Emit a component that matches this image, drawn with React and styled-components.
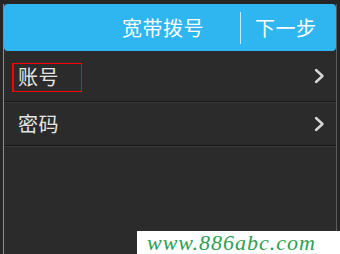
import React from "react";
import styled, { createGlobalStyle } from "styled-components";

const Global = createGlobalStyle`
  html, body {
    margin: 0;
    padding: 0;
    background: #2a2a2a;
  }
  body {
    font-family: "Noto Sans CJK SC", "Noto Sans", sans-serif;
  }
`;

const Screen = styled.div`
  position: relative;
  width: 340px;
  height: 254px;
  box-sizing: border-box;
  padding: 4px 3px 0 3px;
  background: #262626;
  overflow: hidden;
`;

const Panel = styled.div`
  height: 100%;
  background: #2b2b2b;
  border-left: 1px solid #8c8c8c;
  border-right: 1px solid #5a5a5a;
`;

const Header = styled.div`
  height: 47px;
  background: #2fb5f0;
  border-radius: 4px;
  display: flex;
  align-items: center;
  white-space: nowrap;
`;

const Title = styled.div`
  flex-shrink: 0;
  margin-left: 118px;
  color: #ffffff;
  font-size: 20px;
  letter-spacing: 0.5px;
  width: 110px;
`;

const Divider = styled.div`
  flex-shrink: 0;
  width: 1px;
  height: 32px;
  background: #c8ecfb;
  margin-left: 8px;
`;

const Next = styled.div`
  flex-shrink: 0;
  margin-left: 14px;
  color: #ffffff;
  font-size: 20px;
  letter-spacing: 0.5px;
`;

const Row = styled.div`
  height: ${(p) => p.h}px;
  display: flex;
  align-items: center;
  justify-content: space-between;
  padding: 0 11px 0 14px;
  border-bottom: 1px solid #161616;
  box-shadow: 0 1px 0 #3a3a3a;
`;

const Label = styled.div`
  position: relative;
  color: #e4e4e4;
  font-size: 20px;
  letter-spacing: 0.5px;
`;

const Mark = styled.div`
  position: absolute;
  left: -6px;
  top: 1px;
  width: 67px;
  height: 27px;
  border: 1px solid #ff0000;
  border-left-width: 2px;
`;

const Chevron = () => (
  <svg width="12" height="16" viewBox="0 0 12 16">
    <path d="M3 2 L9.5 8 L3 14" fill="none" stroke="#d6d6d6" strokeWidth="2.4" strokeLinecap="round" strokeLinejoin="round" />
  </svg>
);

const Watermark = styled.div`
  position: absolute;
  right: 0;
  bottom: 0;
  width: 203px;
  height: 23px;
  background: #ffffff;
  color: #2e9e52;
  font-family: "Liberation Serif", "DejaVu Serif", serif;
  font-style: italic;
  font-size: 22px;
  line-height: 23px;
  padding-left: 10px;
  box-sizing: border-box;
  letter-spacing: 1px;
`;

export default function App() {
  return (
    <>
      <Global />
      <Screen>
        <Panel>
          <Header>
            <Title>宽带拨号</Title>
            <Divider />
            <Next>下一步</Next>
          </Header>
          <Row h={50}>
            <Label>
              <Mark />
              账号
            </Label>
            <Chevron />
          </Row>
          <Row h={43}>
            <Label>密码</Label>
            <Chevron />
          </Row>
        </Panel>
        <Watermark>www.886abc.com</Watermark>
      </Screen>
    </>
  );
}
